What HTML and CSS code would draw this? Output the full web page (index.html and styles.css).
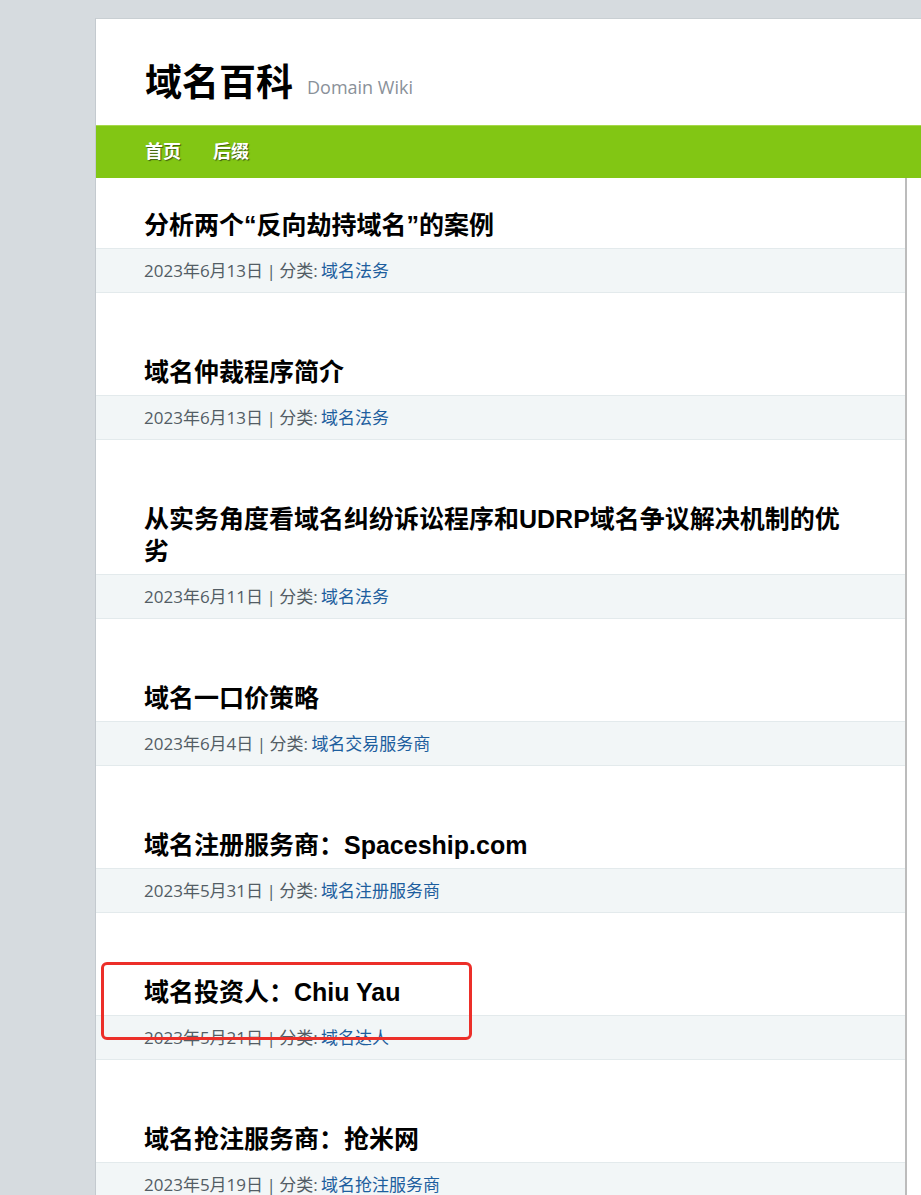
FILE: index.html
```html
<!DOCTYPE html>
<html lang="zh-CN">
<head>
<meta charset="utf-8">
<title>域名百科</title>
<link rel="stylesheet" href="styles.css">
</head>
<body>
<div class="page">
  <header class="site-header">
    <h1 class="site-title">域名百科</h1>
    <span class="site-desc">Domain Wiki</span>
  </header>
  <nav class="site-nav">
    <a href="#">首页</a>
    <a href="#">后缀</a>
  </nav>
  <main class="content">
    <article class="post">
      <h2 class="post-title">分析两个“反向劫持域名”的案例</h2>
      <div class="post-meta">2023年6月13日 | 分类: <a href="#">域名法务</a></div>
    </article>
    <article class="post">
      <h2 class="post-title">域名仲裁程序简介</h2>
      <div class="post-meta">2023年6月13日 | 分类: <a href="#">域名法务</a></div>
    </article>
    <article class="post">
      <h2 class="post-title">从实务角度看域名纠纷诉讼程序和UDRP域名争议解决机制的优劣</h2>
      <div class="post-meta">2023年6月11日 | 分类: <a href="#">域名法务</a></div>
    </article>
    <article class="post">
      <h2 class="post-title">域名一口价策略</h2>
      <div class="post-meta">2023年6月4日 | 分类: <a href="#">域名交易服务商</a></div>
    </article>
    <article class="post">
      <h2 class="post-title">域名注册服务商：Spaceship.com</h2>
      <div class="post-meta">2023年5月31日 | 分类: <a href="#">域名注册服务商</a></div>
    </article>
    <article class="post">
      <h2 class="post-title">域名投资人：Chiu Yau</h2>
      <div class="post-meta">2023年5月21日 | 分类: <a href="#">域名达人</a></div>
    </article>
    <article class="post">
      <h2 class="post-title">域名抢注服务商：抢米网</h2>
      <div class="post-meta">2023年5月19日 | 分类: <a href="#">域名抢注服务商</a></div>
    </article>
  </main>
</div>
<div class="highlight-box"></div>
</body>
</html>
```

FILE: styles.css
```css
html, body {
  margin: 0;
  padding: 0;
  overflow: hidden;
}
body {
  background: #d6dbdf;
  font-family: "Open Sans", "Noto Sans CJK SC", sans-serif;
  position: relative;
  min-height: 1195px;
}
.page {
  margin: 18px 0 0 95px;
  background: #fff;
  border-left: 1px solid #c4cacf;
  border-top: 1px solid #c9cfd3;
  min-height: 1200px;
}
.site-header {
  height: 106px;
  display: flex;
  align-items: flex-end;
  padding-left: 49px;
  box-sizing: border-box;
  padding-bottom: 26px;
}
.site-title {
  margin: 0;
  font-family: "Noto Sans CJK SC", sans-serif;
  font-size: 37px;
  font-weight: 700;
  color: #000;
  line-height: 1;
}
.site-desc {
  margin-left: 14px;
  font-family: "Open Sans", sans-serif;
  font-size: 18px;
  color: #8a9199;
  line-height: 1;
  padding-bottom: 3px;
}
.site-nav {
  height: 53px;
  background: #82c614;
  border-top: 1px solid #a6d84a;
  box-sizing: border-box;
  display: flex;
  align-items: center;
  gap: 32px;
  padding-left: 49px;
  padding-bottom: 4px;
}
.site-nav a {
  color: #fff;
  text-decoration: none;
  font-family: "Noto Sans CJK SC", sans-serif;
  font-weight: 700;
  font-size: 18px;
  text-shadow: 1px 1px 1px #3d5a10;
  line-height: 1;
}
.content {
  margin-right: 14px;
  border-right: 2px solid #bcbcbc;
  padding-top: 31px;
}
.post + .post {
  margin-top: 63px;
}
.post-title {
  margin: 0 0 7px 0;
  padding: 0 50px 0 48px;
  font-family: "Liberation Sans", "Noto Sans CJK SC", sans-serif;
  font-size: 25px;
  font-weight: 700;
  line-height: 32px;
  color: #000;
}
.post-meta {
  height: 45px;
  box-sizing: border-box;
  background: #f2f6f7;
  border-top: 1px solid #e3eaec;
  border-bottom: 1px solid #e3eaec;
  padding-left: 48px;
  font-size: 17px;
  line-height: 43px;
  color: #535d65;
  white-space: nowrap;
  word-spacing: -1px;
}
.post-meta a {
  color: #1d5e9e;
  text-decoration: none;
}
.highlight-box {
  position: absolute;
  left: 101px;
  top: 962px;
  width: 371px;
  height: 78px;
  box-sizing: border-box;
  border: 3px solid #ec2f29;
  border-radius: 6px;
  pointer-events: none;
}
```
